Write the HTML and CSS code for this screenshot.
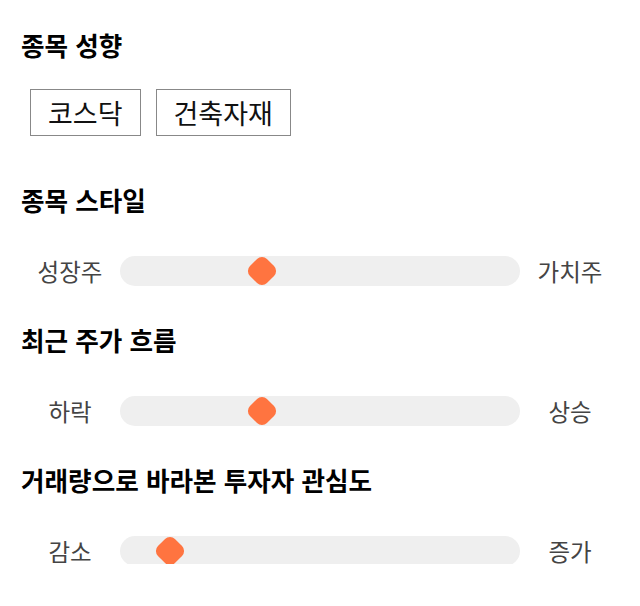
FILE: index.html
```html
<!DOCTYPE html>
<html lang="ko">
<head>
<meta charset="utf-8">
<link rel="stylesheet" href="styles.css">
</head>
<body>
<main class="page">
  <section class="section">
    <h2 class="title">종목 성향</h2>
    <div class="tags">
      <span class="tag">코스닥</span>
      <span class="tag">건축자재</span>
    </div>
  </section>
  <section class="section">
    <h2 class="title">종목 스타일</h2>
    <div class="slider">
      <span class="label">성장주</span>
      <div class="track"><span class="thumb" style="left: 35.4%"></span></div>
      <span class="label">가치주</span>
    </div>
  </section>
  <section class="section">
    <h2 class="title">최근 주가 흐름</h2>
    <div class="slider">
      <span class="label">하락</span>
      <div class="track"><span class="thumb" style="left: 35.4%"></span></div>
      <span class="label">상승</span>
    </div>
  </section>
  <section class="section">
    <h2 class="title">거래량으로 바라본 투자자 관심도</h2>
    <div class="slider">
      <span class="label">감소</span>
      <div class="track"><span class="thumb" style="left: 12.5%"></span></div>
      <span class="label">증가</span>
    </div>
  </section>
</main>
</body>
</html>
```
FILE: styles.css
```css
html, body {
  margin: 0;
  padding: 0;
  background: #ffffff;
}
body {
  font-family: "Noto Sans CJK KR", "Noto Sans", sans-serif;
  color: #111111;
}
.page {
  padding: 30px 20px 0 20px;
  display: flex;
  flex-direction: column;
  gap: 41px;
}
.section {
  display: flex;
  flex-direction: column;
}
.title {
  margin: 0 0 39px 1px;
  font-size: 25.6px;
  line-height: 30px;
  font-weight: 700;
  color: #000000;
}
.section:first-child .title {
  margin-bottom: 29px;
}
.section:first-child {
  margin-bottom: 8px;
}
.tags {
  display: flex;
  gap: 15px;
  padding-left: 10px;
}
.tag {
  display: inline-flex;
  align-items: center;
  justify-content: center;
  height: 45px;
  padding: 0 17px;
  border: 1px solid #888888;
  font-size: 27px;
  color: #111111;
}
.slider {
  display: grid;
  grid-template-columns: 100px 1fr 100px;
  align-items: center;
  height: 30px;
}
.label {
  text-align: center;
  font-size: 23.5px;
  color: #444444;
}
.track {
  position: relative;
  height: 30px;
  border-radius: 15px;
  background: #efefef;
}
.thumb {
  position: absolute;
  top: 3px;
  width: 24px;
  height: 24px;
  margin-left: -12px;
  border-radius: 7px;
  background: #ff7440;
  transform: rotate(45deg);
}
```
